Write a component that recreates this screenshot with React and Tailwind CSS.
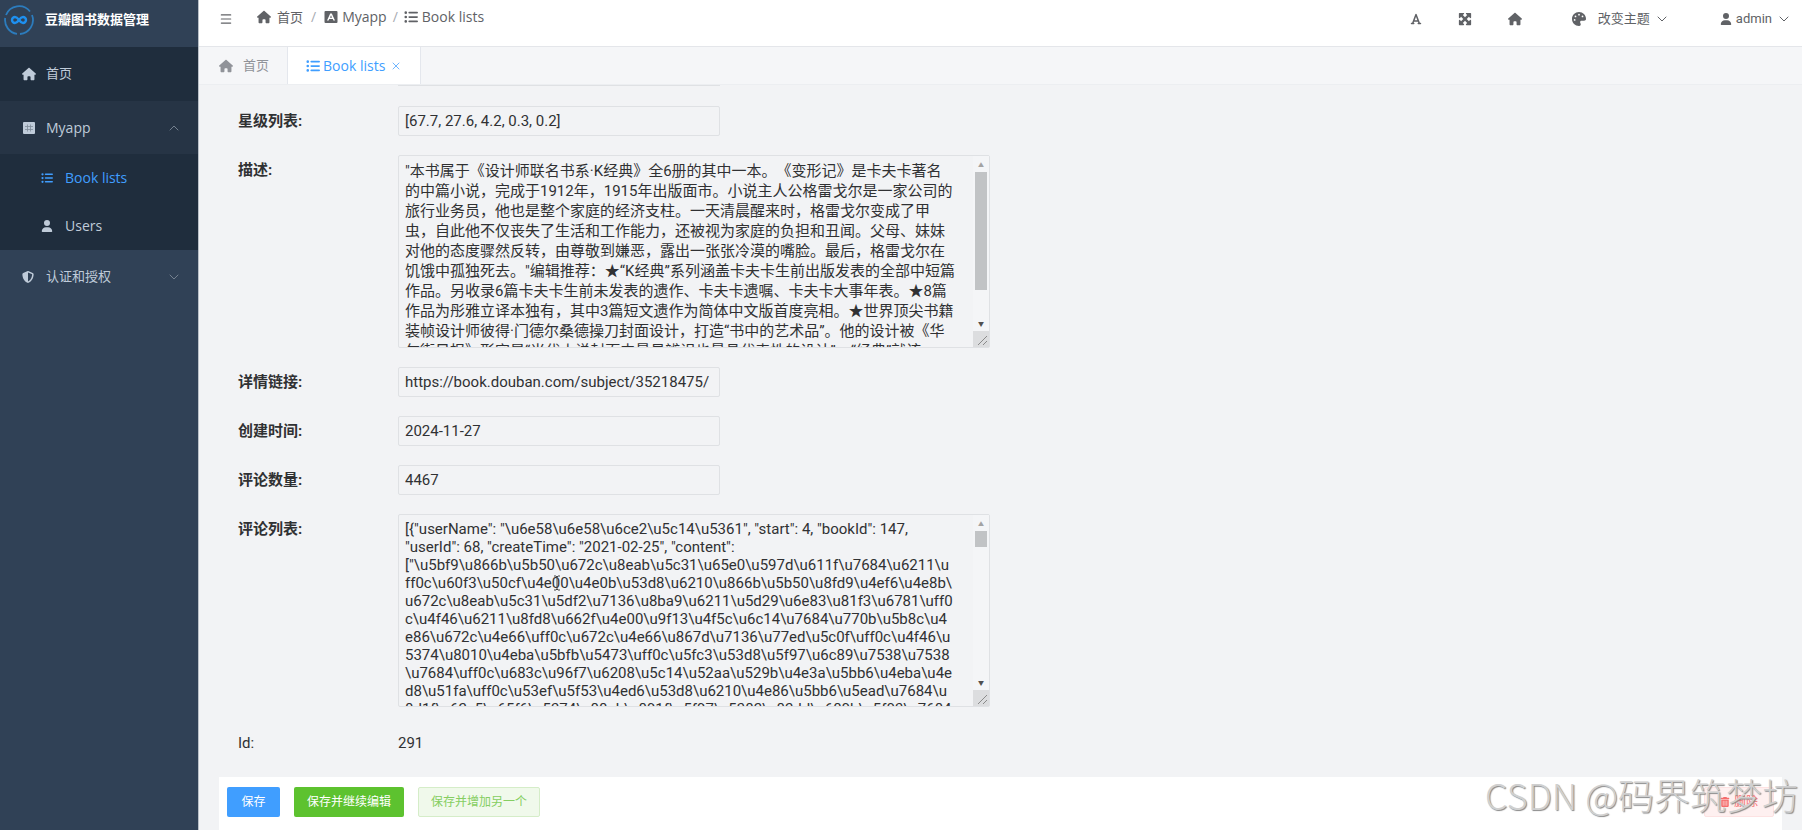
import { useState } from 'react'
import {
  FaHouse, FaListUl, FaUser, FaPalette, FaFont, FaMaximize, FaShieldHalved, FaTrashCan,
} from 'react-icons/fa6'
import { ChevronUp, ChevronDown, X, Menu } from 'lucide-react'

const DESCRIPTION = [
  '"本书属于《设计师联名书系·K经典》全6册的其中一本。《变形记》是卡夫卡著名',
  '的中篇小说，完成于1912年，1915年出版面市。小说主人公格雷戈尔是一家公司的',
  '旅行业务员，他也是整个家庭的经济支柱。一天清晨醒来时，格雷戈尔变成了甲',
  '虫，自此他不仅丧失了生活和工作能力，还被视为家庭的负担和丑闻。父母、妹妹',
  '对他的态度骤然反转，由尊敬到嫌恶，露出一张张冷漠的嘴脸。最后，格雷戈尔在',
  '饥饿中孤独死去。"编辑推荐：★“K经典”系列涵盖卡夫卡生前出版发表的全部中短篇',
  '作品。另收录6篇卡夫卡生前未发表的遗作、卡夫卡遗嘱、卡夫卡大事年表。★8篇',
  '作品为彤雅立译本独有，其中3篇短文遗作为简体中文版首度亮相。★世界顶尖书籍',
  '装帧设计师彼得·门德尔桑德操刀封面设计，打造“书中的艺术品”。他的设计被《华',
  '尔街日报》形容是“当代小说封面中最易辨识也最具代表性的设计”。“经典”就该',
].join('\n')

const COMMENTS = String.raw`[{"userName": "\u6e58\u6e58\u6ce2\u5c14\u5361", "start": 4, "bookId": 147,
"userId": 68, "createTime": "2021-02-25", "content":
["\u5bf9\u866b\u5b50\u672c\u8eab\u5c31\u65e0\u597d\u611f\u7684\u6211\u
ff0c\u60f3\u50cf\u4e00\u4e0b\u53d8\u6210\u866b\u5b50\u8fd9\u4ef6\u4e8b\
u672c\u8eab\u5c31\u5df2\u7136\u8ba9\u6211\u5d29\u6e83\u81f3\u6781\uff0
c\u4f46\u6211\u8fd8\u662f\u4e00\u9f13\u4f5c\u6c14\u7684\u770b\u5b8c\u4
e86\u672c\u4e66\uff0c\u672c\u4e66\u867d\u7136\u77ed\u5c0f\uff0c\u4f46\u
5374\u8010\u4eba\u5bfb\u5473\uff0c\u5fc3\u53d8\u5f97\u6c89\u7538\u7538
\u7684\uff0c\u683c\u96f7\u6208\u5c14\u52aa\u529b\u4e3a\u5bb6\u4eba\u4e
d8\u51fa\uff0c\u53ef\u5f53\u4ed6\u53d8\u6210\u4e86\u5bb6\u5ead\u7684\u
8d1f\u62c5\u65f6\u5374\u88ab\u891f\u5f97\u5382\u82dd\u680b\u5f03\u7684`

const INPUT = 'h-[30px] w-[322px] rounded-xs border border-[#dfe1e4] bg-transparent px-1.5 text-[15px] text-[#303133] outline-none'

function Logo() {
  return (
    <svg viewBox="0 0 32 32" className="size-8 shrink-0" fill="none">
      <path d="M3 11A14 14 0 0 1 27 7.500M29 11A14 14 0 0 1 17 30M14 29.900A14 14 0 0 1 2.200 14" stroke="#2c7cbd" strokeWidth="1.800" />
      <path d="M16 16c-1.400-2-2.500-3-4-3a3 3 0 0 0 0 6c1.500 0 2.600-1 4-3s2.500-3 4-3a3 3 0 0 1 0 6c-1.500 0-2.600-1-4-3z" stroke="#1e90f0" strokeWidth="2.400" />
    </svg>
  )
}

// square badge with an "A"-like figure cut out
function AppIcon({ className }) {
  return (
    <svg viewBox="0 0 14 14" className={className} fill="currentColor">
      <path fillRule="evenodd" d="M1.500 1h11a1 1 0 0 1 1 1v10a1 1 0 0 1-1 1h-11a1 1 0 0 1-1-1V2a1 1 0 0 1 1-1zM6.200 3.500 3 10.500h1.600l.6-1.500h3.600l.6 1.500H11L7.800 3.500zM7 5.300l1 2.400H6z" />
    </svg>
  )
}

// table-like square used for the app entry in the menu
function GridIcon({ className }) {
  return (
    <svg viewBox="0 0 14 14" className={className}>
      <rect x="1" y="1" width="12" height="12" rx="1" fill="currentColor" />
      <path d="M3 5.500h8M3 8.500h8M5.500 3.500v7M8.500 3.500v7" stroke="#7f8b99" strokeWidth=".8" />
    </svg>
  )
}

function Sidebar() {
  return (
    <aside className="w-[199px] shrink-0 border-r border-[#b9c0c8] bg-[#304156] font-['Open_Sans','Noto_Sans_CJK_SC',sans-serif] text-[#bfcbd9]">
      <div className="flex h-[47px] items-center gap-2.5 pb-2 pl-[3px]">
        <Logo />
        <h1 className="text-[13px] font-bold text-white">豆瓣图书数据管理</h1>
      </div>
      <nav className="text-[13px]">
        <a href="#home" className="flex h-[54px] items-center gap-2.5 bg-[#1f2d3d] pl-[22px]">
          <FaHouse className="size-3.5" />首页
        </a>
        <button className="flex h-[53px] w-full items-center gap-2.5 bg-[#263445] pr-4 pl-[22px]">
          <GridIcon className="size-3.5" />
          <span className="flex-1 text-left text-sm">Myapp</span>
          <ChevronUp className="size-4 text-[#75818f]" strokeWidth={1.5} />
        </button>
        <div className="bg-[#1f2d3d] text-sm">
          <a href="#books" className="flex h-12 items-center gap-3 pl-[41px] text-[#409eff]">
            <FaListUl className="size-3" />Book lists
          </a>
          <a href="#users" className="flex h-12 items-center gap-3 pl-[41px]">
            <FaUser className="size-3" />Users
          </a>
        </div>
        <button className="flex h-[53px] w-full items-center gap-3 pr-4 pl-[22px]">
          <FaShieldHalved className="size-3" />
          <span className="flex-1 text-left">认证和授权</span>
          <ChevronDown className="size-4 text-[#75818f]" strokeWidth={1.5} />
        </button>
      </nav>
    </aside>
  )
}

function Header() {
  return (
    <header className="flex h-[47px] items-center border-b border-[#e4e6ea] bg-white pr-2.5 pb-2 pl-5 text-[13px] text-[#606266]">
      <button aria-label="menu"><Menu className="size-3.5" /></button>
      <nav className="ml-6 flex flex-1 items-center pb-1 font-['Open_Sans','Noto_Sans_CJK_SC',sans-serif] text-sm">
        <a href="#home" className="flex items-center gap-1.5 text-[13px]"><FaHouse className="size-3.5" />首页</a>
        <span className="mx-2 text-[#a8abb2]">/</span>
        <a href="#app" className="flex items-center gap-1"><AppIcon className="size-3.5" />Myapp</a>
        <span className="mx-1.5 text-[#a8abb2]">/</span>
        <a href="#books" className="flex items-center gap-1"><FaListUl className="size-3.5" />Book lists</a>
      </nav>
      <div className="flex items-center">
        <button aria-label="font" className="mr-9"><FaFont className="size-3" /></button>
        <button aria-label="fullscreen" className="mr-9"><FaMaximize className="size-3.5" /></button>
        <button aria-label="home" className="mr-[50px]"><FaHouse className="size-3.5" /></button>
        <button className="mr-[50px] flex items-center gap-3">
          <FaPalette className="size-3.5" />
          <span className="flex items-center gap-1">改变主题<ChevronDown className="size-4" strokeWidth={1.5} /></span>
        </button>
        <button className="flex items-center gap-1">
          <FaUser className="size-3" />admin<ChevronDown className="size-4" strokeWidth={1.5} />
        </button>
      </div>
    </header>
  )
}

function Tabs() {
  return (
    <div className="flex h-[38px] border-b border-[#eceef1] bg-[#f5f6f8] font-['Open_Sans','Noto_Sans_CJK_SC',sans-serif] text-[13px]">
      <button className="flex items-center gap-2.5 border-r border-[#e4e7ed] pr-[18px] pl-5 text-[#909399]">
        <FaHouse className="size-3.5" />首页
      </button>
      <button className="flex items-center gap-[3px] border-r border-[#e4e7ed] bg-white px-[18px] text-sm text-[#409eff]">
        <FaListUl className="size-3.5" />Book lists<X className="ml-0.5 size-3" strokeWidth={1.5} />
      </button>
    </div>
  )
}

function Row({ id, label, children }) {
  return (
    <div className="flex items-start">
      <label htmlFor={id} className="w-40 shrink-0 pt-1 text-[15px] leading-[22px] font-bold text-[#303133]">{label}:</label>
      {children}
    </div>
  )
}

function TextArea({ id, value, onChange, lineClass, thumbClass }) {
  return (
    <div className="relative h-[193px] w-[592px]">
      <textarea
        id={id}
        value={value}
        onChange={e => onChange(e.target.value)}
        className={`block size-full resize-none overflow-hidden rounded-xs border border-[#dfe1e4] bg-transparent px-1.5 py-[5px] text-[15px] whitespace-pre text-[#303133] outline-none [text-spacing-trim:space-all] ${lineClass}`}
      />
      {/* scrollbar and resize grip */}
      <div className="absolute inset-y-px right-px flex w-4 flex-col items-center bg-[#f4f5f7]">
        <span className="flex h-4 items-center text-[6px] text-[#a3a3a3]">▲</span>
        <span className={`w-3 bg-[#c1c3c5] ${thumbClass}`} />
        <span className="mt-auto flex h-4 items-center text-[6px] text-[#505050]">▼</span>
        <svg viewBox="0 0 16 16" className="size-4 bg-[#dcdddf]" stroke="#8a8a8a"><path d="M5 14 14 5M10 14l4-4" /></svg>
      </div>
    </div>
  )
}

export default function App() {
  const [form, setForm] = useState({
    stars: '[67.7, 27.6, 4.2, 0.3, 0.2]',
    description: DESCRIPTION,
    link: 'https://book.douban.com/subject/35218475/',
    created: '2024-11-27',
    count: '4467',
    comments: COMMENTS,
  })
  const set = (key) => (value) => setForm({ ...form, [key]: value })
  const input = (key) => (
    <input id={key} className={INPUT} value={form[key]} onChange={e => set(key)(e.target.value)} />
  )

  return (
    <div className="relative flex h-screen overflow-hidden bg-[#f2f3f5] font-['Roboto','Noto_Sans_CJK_SC',sans-serif]">
      <Sidebar />
      <div className="flex min-w-0 flex-1 flex-col">
        <Header />
        <Tabs />
        <main className="flex-1 overflow-hidden pl-[39px]">
          <div className="ml-40 h-px w-[322px] bg-[#dfe1e4]" />
          <form className="flex flex-col gap-[19px] pt-5">
            <Row id="stars" label="星级列表">{input('stars')}</Row>
            <Row id="description" label="描述">
              <TextArea id="description" value={form.description} onChange={set('description')} lineClass="leading-5" thumbClass="h-[118px]" />
            </Row>
            <Row id="link" label="详情链接">{input('link')}</Row>
            <Row id="created" label="创建时间">{input('created')}</Row>
            <Row id="count" label="评论数量">{input('count')}</Row>
            <Row id="comments" label="评论列表">
              <TextArea id="comments" value={form.comments} onChange={set('comments')} lineClass="leading-[18px]" thumbClass="h-4" />
            </Row>
            <div className="flex pt-1.5 text-[15px] leading-[22px] text-[#303133]">
              <span className="w-40">Id:</span>
              <span>291</span>
            </div>
          </form>
        </main>
        <footer className="mr-5 ml-5 flex h-[53px] items-start gap-3.5 bg-white px-2 pt-2.5 text-[12px]">
          <button className="h-[30px] w-[53px] rounded-xs bg-[#409eff] text-white">保存</button>
          <button className="h-[30px] w-[110px] rounded-xs bg-[#5dc22f] text-white">保存并继续编辑</button>
          <button className="h-[30px] w-[122px] rounded-xs border border-[#d5edc8] bg-[#f0f9eb] text-[#85ce61]">保存并增加另一个</button>
          <button className="ml-auto flex h-[30px] w-[70px] items-center justify-center gap-1 rounded-xs border border-[#fde2e2] bg-[#fef0f0] text-[#f56c6c]">
            <FaTrashCan className="size-2.5" />删除
          </button>
        </footer>
      </div>
      {/* text cursor */}
      <svg viewBox="0 0 8 16" className="pointer-events-none absolute top-[575px] left-[553px] h-4 w-2" fill="none" stroke="#444">
        <path d="M1 1h2l1 1 1-1h2M4 2v12M1 15h2l1-1 1 1h2" />
      </svg>
      <div className="pointer-events-none absolute right-1 bottom-3 font-['Noto_Sans_CJK_SC',sans-serif] text-[36px] leading-[48px] font-light text-[#d0d0d0] [text-shadow:1px_1px_1px_#888]">
        CSDN @码界筑梦坊
      </div>
    </div>
  )
}
